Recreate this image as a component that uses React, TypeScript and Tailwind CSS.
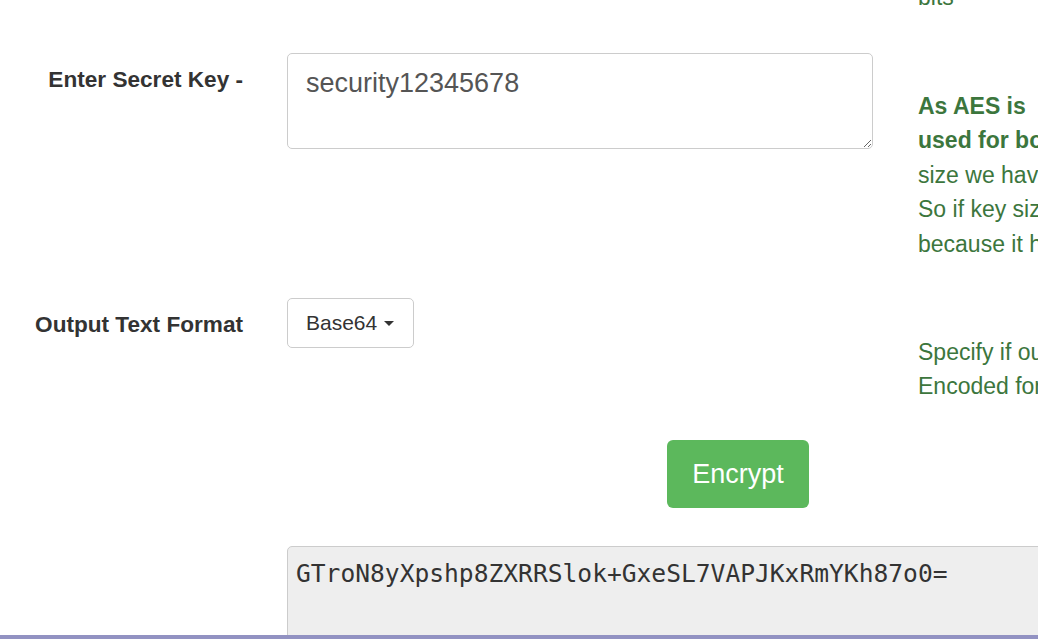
import React from "react";

export default function App() {
  return (
    <div className="relative w-[1038px] h-[639px] overflow-hidden bg-white font-['Liberation_Sans',Arial,sans-serif]">
      <div className="-mt-[20px]">
        {/* Row 0: tail of previous help text */}
        <div className="flex">
          <div className="w-[243px] shrink-0" />
          <div className="ml-[44px] w-[586px] shrink-0" />
          <div className="ml-[45px] w-[420px] shrink-0 text-[23px] leading-[34.5px] text-[#3c763d] whitespace-nowrap">
            bits
          </div>
        </div>

        {/* Row 1: secret key */}
        <div className="flex items-start mt-[38.5px]">
          <div className="w-[243px] shrink-0 mt-[12.5px] text-right text-[22.6px] leading-[28px] font-bold text-[#333] whitespace-nowrap">
            Enter Secret Key -
          </div>
          <div className="ml-[44px] w-[586px] shrink-0">
            <textarea
              defaultValue="security12345678"
              className="block w-full h-[96px] border border-[#ccc] rounded-[5px] pt-[11px] pl-[18px] pr-3 text-[27px] leading-[36px] text-[#555] bg-white outline-none"
            />
          </div>
          <div className="ml-[45px] w-[420px] shrink-0 mt-[35.5px] text-[23px] leading-[34.5px] text-[#3c763d] whitespace-nowrap">
            <div className="font-bold">As AES is</div>
            <div className="font-bold">used for both encryption and decryption. Key</div>
            <div>size we have selected here is 128 bits.</div>
            <div>So if key size is 128 then the secret key</div>
            <div>because it has to be of 16 characters.</div>
          </div>
        </div>

        {/* Row 2: output format */}
        <div className="flex items-start mt-[37px]">
          <div className="w-[243px] shrink-0 mt-[12.5px] text-right text-[22.6px] leading-[28px] font-bold text-[#333] whitespace-nowrap">
            Output Text Format
          </div>
          <div className="ml-[44px] w-[586px] shrink-0">
            <button className="h-[50px] pl-[18px] pr-[19px] border border-[#ccc] rounded-[5px] bg-white text-[21px] text-[#333] flex items-center">
              Base64
              <span className="inline-block w-0 h-0 ml-[7px] border-x-[5px] border-x-transparent border-t-[5px] border-t-[#333]" />
            </button>
          </div>
          <div className="ml-[45px] w-[420px] shrink-0 mt-[36.5px] text-[23px] leading-[34.5px] text-[#3c763d] whitespace-nowrap">
            <div>Specify if output should be Hex or Base64</div>
            <div>Encoded format.</div>
          </div>
        </div>

        {/* Row 3: encrypt button */}
        <div className="flex mt-[36.5px]">
          <div className="w-[243px] shrink-0" />
          <div className="ml-[44px] w-[586px] shrink-0">
            <button className="ml-[380px] w-[142px] h-[68px] rounded-[6px] bg-[#5cb85c] text-white text-[27px]">
              Encrypt
            </button>
          </div>
        </div>

        {/* Row 4: output */}
        <div className="flex mt-[38px]">
          <div className="w-[243px] shrink-0" />
          <div className="ml-[44px] w-[800px] shrink-0 h-[160px] bg-[#eee] border border-[#ccc] rounded-[5px] pt-[9px] pl-[8px] font-['DejaVu_Sans_Mono',monospace] text-[24.6px] leading-[35px] text-[#333] whitespace-nowrap">
            GTroN8yXpshp8ZXRRSlok+GxeSL7VAPJKxRmYKh87o0=
          </div>
        </div>
      </div>

      <div className="absolute left-0 right-0 bottom-0 h-[4px] bg-[#9292c2]" />
    </div>
  );
}
